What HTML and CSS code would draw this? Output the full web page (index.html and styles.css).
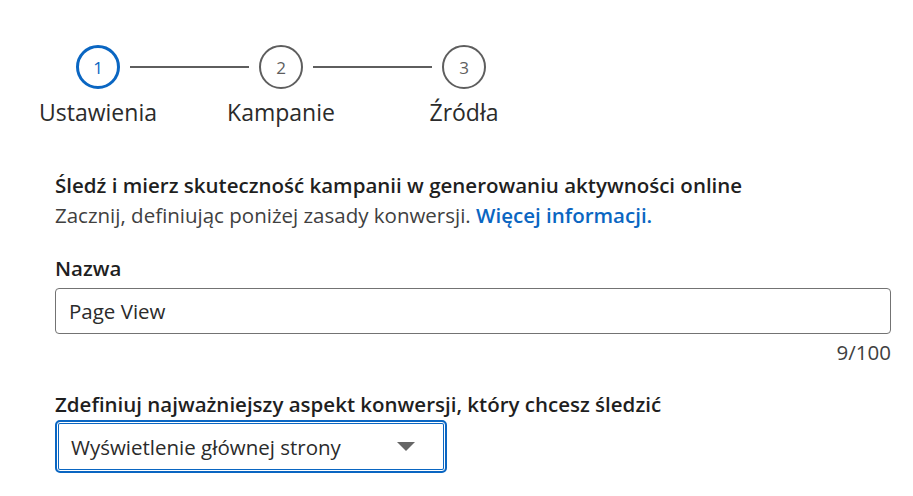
FILE: index.html
```html
<!DOCTYPE html>
<html lang="pl">
<head>
<meta charset="utf-8">
<link rel="stylesheet" href="styles.css">
</head>
<body>
<div class="page">
  <div class="stepper">
    <div class="step active">
      <div class="circle">1</div>
      <div class="label">Ustawienia</div>
    </div>
    <div class="line"></div>
    <div class="step">
      <div class="circle">2</div>
      <div class="label">Kampanie</div>
    </div>
    <div class="line"></div>
    <div class="step">
      <div class="circle">3</div>
      <div class="label">Źródła</div>
    </div>
  </div>

  <div class="form">
    <h2 class="title">Śledź i mierz skuteczność kampanii w generowaniu aktywności online</h2>
    <p class="intro">Zacznij, definiując poniżej zasady konwersji. <a href="#" class="link">Więcej informacji.</a></p>

    <div class="field-label">Nazwa</div>
    <div class="input">Page View</div>
    <div class="counter">9/100</div>

    <div class="field-label second">Zdefiniuj najważniejszy aspekt konwersji, który chcesz śledzić</div>
    <div class="select">
      <span>Wyświetlenie głównej strony</span>
      <span class="caret"></span>
    </div>
  </div>
</div>
</body>
</html>
```

FILE: styles.css
```css
html, body {
  margin: 0;
  padding: 0;
  background: #ffffff;
}

body {
  font-family: "Open Sans", "Noto Sans", "Liberation Sans", sans-serif;
  color: #1f1f1f;
}

.page {
  padding: 45px 0 0 0;
}

.stepper {
  display: flex;
  align-items: flex-start;
  padding-left: 76px;
}

.step {
  width: 44px;
  display: flex;
  flex-direction: column;
  align-items: center;
}

.circle {
  width: 44px;
  height: 44px;
  box-sizing: border-box;
  border: 2px solid #5e5e5e;
  border-radius: 50%;
  display: flex;
  align-items: center;
  justify-content: center;
  font-size: 17px;
  color: #5e5e5e;
}

.step.active .circle {
  border: 3.5px solid #0a66c2;
  color: #0a66c2;
}

.label {
  white-space: nowrap;
  margin-top: 8px;
  font-size: 23px;
  line-height: 30px;
  color: #2b2b2b;
}

.line {
  width: 119px;
  height: 2px;
  background: #5e5e5e;
  margin: 21px 10px 0;
  flex: none;
}

.form {
  padding: 0 22px 0 55px;
  margin-top: 44px;
}

.title {
  margin: 0;
  font-size: 20.5px;
  font-weight: 600;
  line-height: 28px;
  color: #1f1f1f;
}

.intro {
  margin: 2px 0 0;
  font-size: 20.5px;
  line-height: 28px;
  color: #404040;
}

.link {
  color: #0a66c2;
  font-weight: 600;
  text-decoration: none;
}

.field-label {
  margin-top: 25px;
  font-size: 20.5px;
  font-weight: 600;
  line-height: 28px;
  color: #1f1f1f;
}

.input {
  margin-top: 6px;
  height: 46px;
  box-sizing: border-box;
  border: 1.5px solid #737373;
  border-radius: 4px;
  padding: 0 13px;
  display: flex;
  align-items: center;
  font-size: 20.5px;
  color: #2b2b2b;
}

.counter {
  text-align: right;
  font-size: 20.5px;
  line-height: 28px;
  margin-top: 4px;
  color: #404040;
}

.field-label.second {
  margin-top: 24px;
}

.select {
  margin-top: 2px;
  width: 392px;
  height: 53px;
  box-sizing: border-box;
  border: 2px solid #0a66c2;
  border-radius: 5px;
  box-shadow: inset 0 0 0 1px #ffffff, inset 0 0 0 2px #0a66c2;
  padding: 0 30px 0 14px;
  display: flex;
  align-items: center;
  justify-content: space-between;
  font-size: 20.5px;
  color: #2b2b2b;
}

.caret {
  width: 0;
  height: 0;
  border-left: 9px solid transparent;
  border-right: 9px solid transparent;
  border-top: 9px solid #666666;
}
```
